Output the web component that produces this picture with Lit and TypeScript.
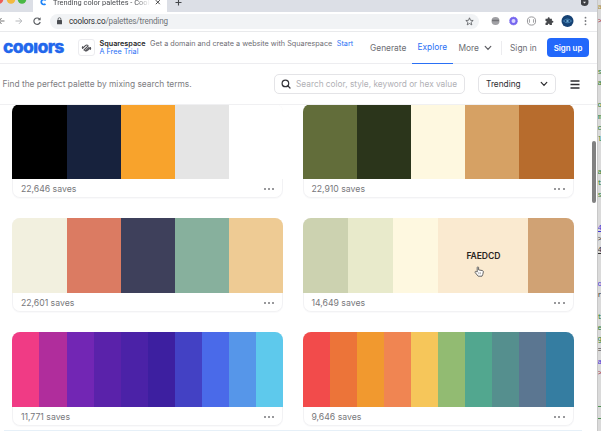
import { LitElement, html, css, svg } from "lit";
import { customElement, property } from "lit/decorators.js";
import { styleMap } from "lit/directives/style-map.js";

interface Palette {
  saves: string;
  colors: string[];
  active?: number;
}

const PALETTES: Palette[] = [
  { saves: "22,646", colors: ["#000000", "#17223d", "#f8a32c", "#e5e5e5", "#ffffff"] },
  { saves: "22,910", colors: ["#626d3a", "#2b351b", "#fef8e0", "#d6a164", "#b76c2d"] },
  { saves: "22,601", colors: ["#f2f0df", "#db7b62", "#3e405b", "#87b09d", "#eecb94"] },
  { saves: "14,649", colors: ["#ccd2b0", "#e8eacb", "#fef8e0", "#faead0", "#d0a274"], active: 3 },
  { saves: "11,771", colors: ["#f03b85", "#b02d9c", "#7226b4", "#5a22aa", "#4b22a7", "#3d1fa0", "#4341c4", "#4a6ae9", "#5696e9", "#5ec9ec"] },
  { saves: "9,646", colors: ["#f24b4b", "#ec7439", "#f1992f", "#f08552", "#f6c65a", "#92bb72", "#52a78f", "#558f8e", "#5b7691", "#357da1"] },
];

const CODE: [string, string][] = [
  ["s", "g"], ["a", "g"], ["", ""], ["o", "g"], ["m", "g"], ["c", "g"], ["l", "g"], ["", ""], ["", ""],
  ["a", "g"], ["t", "g"], ["s", "g"], ["", ""], ["", ""], ["4", "b u"], [">", "k"], ["4", "k u"], ["", ""],
  ["", ""], ["o", "b"], ["r", "k"], ["", ""], ["t", "g"], ["e", "g"], ["g", "g"], ["=", "k"], ["a", "b"], [">", "r"],
];

@customElement("palette-card")
export class PaletteCard extends LitElement {
  @property({ attribute: false }) palette!: Palette;

  static styles = css`
    :host { display: flex; flex-direction: column; box-sizing: border-box; height: 94px; border-radius: 8px; overflow: hidden; background: #fff; box-shadow: inset 0 0 0 1px #f2f2f4, 0 1px 1px #fafafb; }
    .strip { display: flex; height: 74.3px; }
    .swatch { flex: 1; display: flex; align-items: center; justify-content: center; position: relative; }
    .swatch.active { flex: 2; font-size: 8.6px; font-weight: 600; color: #29251f; letter-spacing: -0.1px; }
    .hand { position: absolute; left: 36px; top: 48px; width: 10px; height: 11px; }
    .foot { flex: 1; display: flex; align-items: center; justify-content: space-between; padding: 0 9px 0 8.5px; font-size: 8.7px; color: #77777b; }
    .more { display: flex; gap: 2.2px; }
    .dot { width: 2px; height: 2px; border-radius: 50%; background: #77777b; }
  `;

  render() {
    const p = this.palette;
    return html`
      <div class="strip">
        ${p.colors.map((c, i) => html`<div class="swatch ${p.active === i ? "active" : ""}" style=${styleMap({ background: c })}>
          ${p.active === i ? html`FAEDCD<svg class="hand" viewBox="0 0 10 11"><path d="M3.2 6V1.6c0-1 1.4-1 1.4 0v2.3l3.6.6c.9.2 1.2.7 1.1 1.5L8.8 8.4 8 10.2H4.2L1.2 6.6c-.6-.9.4-1.6 1.1-1z" fill="#fff" stroke="#555" stroke-width=".9"/><path d="M4.8 6.2v2M6.3 6.2v2" stroke="#777" stroke-width=".6"/></svg>` : ""}
        </div>`)}
      </div>
      <div class="foot"><span>${p.saves} saves</span><span class="more"><i class="dot"></i><i class="dot"></i><i class="dot"></i></span></div>
    `;
  }
}

@customElement("app-root")
export class AppRoot extends LitElement {
  static styles = css`
    :host { display: flex; width: 601px; height: 431px; overflow: hidden; font-family: Inter, "Liberation Sans", sans-serif; background: #dadada; }
    * { box-sizing: border-box; }
    svg { display: block; flex: none; }
    .window { width: 597px; height: 431px; overflow: hidden; background: #fff; display: flex; flex-direction: column; position: relative; }
    .row { display: flex; align-items: center; flex: none; white-space: nowrap; }
    .tabs { height: 11.5px; background: #dcdfe6; align-items: flex-start; }
    .lights { width: 33px; height: 11px; overflow: hidden; }
    .tab { width: 134px; height: 12px; background: #fff; display: flex; padding-left: 7px; overflow: hidden; }
    .favicon { margin-right: 6px; }
    .title { font: 7.4px/10px Roboto, sans-serif; margin-top: -2.5px; width: 97px; height: 12px; color: #4a4c50; overflow: hidden; -webkit-mask-image: linear-gradient(90deg, #000 85%, transparent); mask-image: linear-gradient(90deg, #000 85%, transparent); }
    .tab .close { margin-left: 4px; margin-top: -1px; }
    .spacer { flex: 1; }
    .bar { height: 20.5px; border-bottom: 1px solid #e9eaec; padding-right: 9px; }
    .nav { width: 50px; }
    .address { width: 429px; height: 15px; border-radius: 8px; background: #f1f3f5; display: flex; align-items: center; padding: 0 5px 0 6px; font: 8.15px Roboto, sans-serif; letter-spacing: -0.17px; color: #707378; }
    .url { margin-left: 6px; }
    .host { color: #2c2e31; }
    .header { height: 32px; border-bottom: 1px solid #ededf0; font-size: 8.4px; color: #6d6d73; }
    .logo { margin-left: 3px; width: 62px; height: 11px; }
    .word { display: block; font-size: 17.6px; line-height: 11px; font-weight: 800; color: #2267ec; letter-spacing: -0.7px; -webkit-text-stroke: 0.35px #2267ec; transform: translateY(-1px); }
    .short { display: inline-block; transform: scaleY(0.75); transform-origin: 50% 11.5px; }
    .sponsor { width: 17px; height: 17px; margin-left: 13px; border: 1px solid #ececef; border-radius: 3px; display: grid; place-items: center; }
    .ad { margin-left: 4.5px; width: 259.5px; font-size: 7.25px; line-height: 8.5px; padding-top: 1px; }
    .ad b { font-weight: 600; color: #27272a; margin-right: 4.5px; }
    .blue { color: #2a70f5; }
    .gap { margin-left: 4.5px; }
    .menu { display: flex; align-items: center; height: 31px; }
    .generate { margin-left: 11px; width: 42px; }
    .explore { width: 41px; padding-left: 5.5px; height: 32px; border-bottom: 1px solid #2a70f5; color: #2a70f5; }
    .more { padding-left: 5.5px; width: 38.5px; justify-content: space-between; }
    .signin { border-left: 1px solid #ececef; height: 14px; line-height: 14px; margin-left: 9px; padding-left: 8.5px; width: 46.5px; }
    .signup { width: 42px; height: 19px; border-radius: 4px; background: #2268fb; color: #fff; font-weight: 600; font-size: 7.9px; display: flex; align-items: center; justify-content: center; }
    .filters { height: 41px; background: #fff; border-bottom: 1px solid #f0f0f2; font-size: 8.8px; color: #7d7d82; position: relative; z-index: 1; }
    .prompt { padding-left: 2.5px; width: 272px; font-size: 8.4px; }
    .box { height: 20.5px; border: 1px solid #e4e4e7; border-radius: 5px; display: flex; align-items: center; }
    .search { margin-left: 2px; width: 191px; padding-left: 6px; color: #b0b0b5; font-size: 8.3px; }
    .search span { margin-left: 5px; }
    .select { margin-left: 13px; width: 78px; padding: 0 7px; justify-content: space-between; color: #2c2c30; font-size: 8.3px; }
    .burger { margin-left: 14px; }
    .grid { display: grid; grid-template-columns: 270.7px 270.7px; column-gap: 19.8px; row-gap: 20px; padding-left: 12.4px; margin-top: -0.55px; }
    .scroll { position: absolute; right: 1px; top: 141px; width: 4px; height: 62px; border-radius: 2px; background: #818181; }
    .fold { position: absolute; left: 4px; top: 430px; width: 578px; height: 1px; background: #e6f0f8; }
    .code { flex: 1; overflow: hidden; border-left: 1px solid #c8c8c8; padding-top: 2px; font: 7.4px/11.15px "Liberation Mono", monospace; }
    .line { height: 11.15px; width: 8px; margin-left: -0.5px; }
    .line.second { margin-top: 3px; margin-bottom: 39.7px; }
    .y { color: #ab9345; }
    .g { color: #2c8430; } .b { color: #4237d8; } .k { color: #333; } .r { color: #a02a48; }
    .u { text-decoration: underline; }
    .rule { height: 1px; background: #4f9152; margin-top: 11px; }
    .rule.first { margin-top: 27px; }
  `;

  private chevron = (c: string) => svg`<svg width="8" height="6" viewBox="0 0 8 6"><path d="M1.2 1.4 4 4.3l2.8-2.9" fill="none" stroke=${c} stroke-width="1.2" stroke-linecap="round"/></svg>`;

  render() {
    return html`
      <div class="window">
        <div class="row tabs">
          <svg class="lights" viewBox="0 0 33 11"><circle cx="-1" cy="-.5" r="4.3" fill="#ee5d56"/><circle cx="11" cy="-.5" r="4.3" fill="#f3b93f"/><circle cx="22" cy="-.5" r="4.3" fill="#49b844"/></svg>
          <div class="tab">
            <svg class="favicon" width="7" height="8" viewBox="0 0 7 8"><path d="M5.7 .4A2.5 2.5 0 1 0 5.5 3.8" fill="none" stroke="#1d83f7" stroke-width="1.7"/></svg>
            <div class="title">Trending color palettes - Coolors</div>
            <svg class="close" width="8" height="8" viewBox="0 0 8 8"><path d="m1.8 1.2 4 4m0-4-4 4" stroke="#444" stroke-width="1"/></svg>
          </div>
          <svg width="24" height="8" viewBox="0 0 24 8"><path d="M8.5 2.5h6M11.5-.5v6" stroke="#44474b" stroke-width="1.1"/></svg>
          <div class="spacer"></div>
          <svg width="16" height="8" viewBox="0 0 16 8"><circle cx="3.5" cy="2" r="4" fill="#3f4145"/><path d="M2 1.7h3L3.5 3.5z" fill="#eee"/></svg>
        </div>
        <div class="row bar">
          <svg class="nav" height="14" viewBox="0 0 50 14"><g fill="none" stroke-width="1"><path d="M-1 7h5.5M1.5 4-1 7l2.5 3" stroke="#777"/><path d="M15.5 7h6M19 4.2 21.8 7 19 9.8" stroke="#b6b8bb"/><path d="M39.6 5.2A3.2 3.2 0 1 0 40.2 8" stroke="#5c5f63" stroke-width="1.2"/></g><path d="M40.6 3.3v3h-3z" fill="#5c5f63"/></svg>
          <div class="address">
            <svg width="7" height="8" viewBox="0 0 7 8"><rect x="1" y="3" width="5" height="4.2" rx=".5" fill="#4b4e52"/><path d="M2.1 3.2V2.1a1.4 1.4 0 0 1 2.8 0v1.1" fill="none" stroke="#4b4e52" stroke-width=".8"/></svg>
            <span class="url"><span class="host">coolors.co</span>/palettes/trending</span>
            <div class="spacer"></div>
            <svg width="9" height="9" viewBox="0 0 9 9"><path d="m4.5 .8 1 2.5 2.7.2-2.1 1.8.7 2.6-2.3-1.4-2.3 1.4.7-2.6L.8 3.5l2.7-.2z" fill="none" stroke="#55585c" stroke-width=".8"/></svg>
          </div>
          <div class="spacer"></div>
          <svg width="99" height="14" viewBox="0 0 99 14">
            <circle cx="6.5" cy="7" r="4" fill="#a1a1a5"/><path d="M3 6.5h7" stroke="#737377" stroke-width="1.5"/>
            <circle cx="24.5" cy="7" r="3" fill="#d9d5ff" stroke="#7565ef" stroke-width="2"/><circle cx="24.5" cy="7" r="4" fill="none" stroke="#8d80f2" stroke-dasharray="1 1"/>
            <circle cx="42.5" cy="7" r="4.1" fill="#fff" stroke="#8c8c90" stroke-width=".9"/><path d="M41 5.2q-.8 0-.6 1.8-.1 1.8.6 1.8M44 5.2q.8 0 .6 1.8.1 1.8-.6 1.8" fill="none" stroke="#77777b" stroke-width=".7"/>
            <path d="M56.5 4.7h2.2c-.4-2 2.4-2 2 0h2.2v2c2-.4 2 2.4 0 2V11h-2.3c.2-1.7-2-1.7-1.8 0h-2.3V8.7c1.7.1 1.7-2 0-1.8z" fill="#46484c"/>
            <circle cx="78.5" cy="7" r="6" fill="#164274"/><path d="M74.4 7q4-4 8.2 0-4 3.6-8.2 0z" fill="none" stroke="#4d8fc0" stroke-width=".8"/><circle cx="78.5" cy="7" r="1.2" fill="#6fa9cf"/>
            <g fill="#77797d"><circle cx="96.5" cy="3.7" r=".9"/><circle cx="96.5" cy="7" r=".9"/><circle cx="96.5" cy="10.3" r=".9"/></g>
          </svg>
        </div>
        <div class="row header">
          <div class="logo"><span class="word">coo<span class="short">l</span>ors</span></div>
          <div class="sponsor"><svg width="11" height="10" viewBox="0 0 11 10"><g fill="none" stroke="#505055" stroke-width="1.1" stroke-linecap="round"><path d="M1.6 5.4 4.4 2.6q1.3-1.2 2.6-.2M3 7 7 3.2M4.4 7.8 8 4.4M9.4 4.6 6.6 7.4q-1.3 1.2-2.6.2M1.6 5.4q-.6-1 .1-1.8M9.4 4.6q.6 1-.1 1.8"/></g></svg></div>
          <div class="ad"><b>Squarespace</b>Get a domain and create a website with Squarespace<span class="blue gap">Start</span><br><span class="blue">A Free Trial</span></div>
          <div class="menu generate">Generate</div>
          <div class="menu explore">Explore</div>
          <div class="menu more">More ${this.chevron("#5d5d62")}</div>
          <div class="signin">Sign in</div>
          <div class="signup">Sign up</div>
        </div>
        <div class="row filters">
          <div class="prompt">Find the perfect palette by mixing search terms.</div>
          <div class="box search"><svg width="10" height="10" viewBox="0 0 10 10"><circle cx="4.4" cy="4.4" r="3.3" fill="none" stroke="#333338" stroke-width="1.2"/><path d="m6.9 6.9 2.1 2.1" stroke="#333338" stroke-width="1.3" stroke-linecap="round"/></svg><span>Search color, style, keyword or hex value</span></div>
          <div class="box select">Trending ${this.chevron("#2c2c30")}</div>
          <svg class="burger" width="10" height="9" viewBox="0 0 10 9"><path d="M.5 1h9M.5 4.5h9M.5 8h9" stroke="#2c2c30" stroke-width="1.3"/></svg>
        </div>
        <div class="grid">${PALETTES.map((p) => html`<palette-card .palette=${p}></palette-card>`)}</div>
        <div class="scroll"></div>
        <div class="fold"></div>
      </div>
      <div class="code">
        <div class="line y">a</div><div class="line second r">&gt;</div>
        ${CODE.map(([t, k]) => html`<div class="line ${k}">${t}</div>`)}
        <div class="rule first"></div><div class="rule"></div>
      </div>
    `;
  }
}
